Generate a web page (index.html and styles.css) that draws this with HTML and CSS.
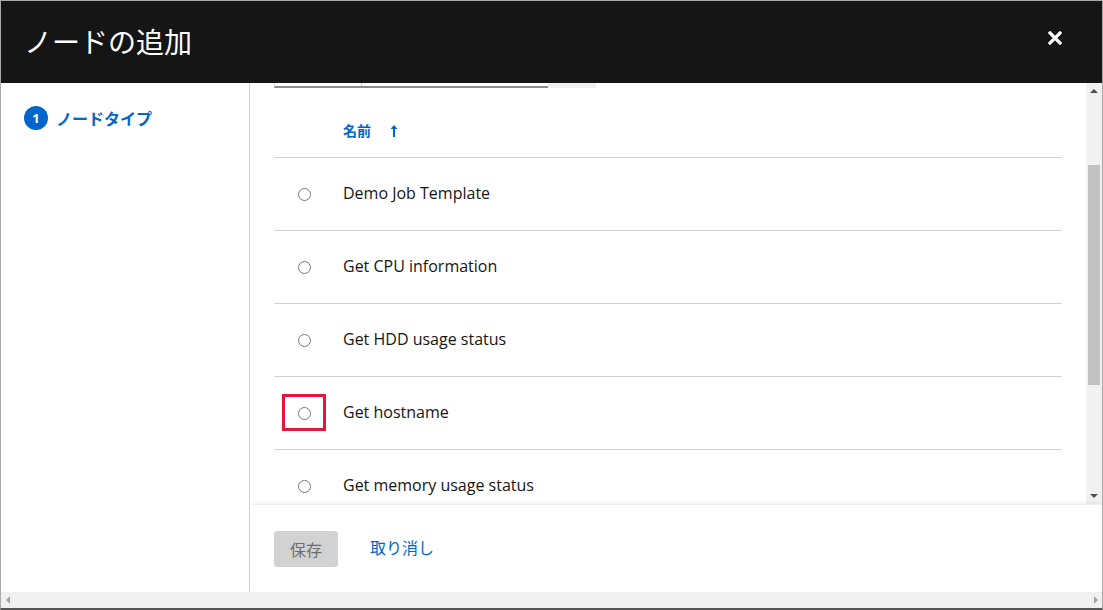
FILE: index.html
```html
<!DOCTYPE html>
<html lang="ja">
<head>
<meta charset="utf-8">
<title>ノードの追加</title>
<link rel="stylesheet" href="styles.css">
</head>
<body>
<div class="window">
  <header class="header">
    <h1 class="title">ノードの追加</h1>
    <button class="close" aria-label="閉じる">
      <svg width="14" height="14" viewBox="0 0 14 14"><path d="M2 2 L12 12 M12 2 L2 12" stroke="#fff" stroke-width="3.2" stroke-linecap="square"/></svg>
    </button>
  </header>
  <div class="body">
    <nav class="sidebar">
      <div class="step"><span class="step-num">1</span><span class="step-label">ノードタイプ</span></div>
    </nav>
    <div class="main">
      <div class="scroll">
        <div class="content">
          <div class="toolbar">
            <div class="search"><span class="search-a"></span><span class="search-b"></span></div>
            <div class="search-btn"></div>
          </div>
          <div class="thead">
            <span class="th-name">名前</span>
            <svg class="sort" width="8" height="12" viewBox="0 0 8 12"><path d="M4 0 L7.5 4 H5 V12 H3 V4 H0.5 Z" fill="#0066cc"/></svg>
          </div>
          <div class="row"><span class="radio-cell"><span class="radio"></span></span><span class="name">Demo Job Template</span></div>
          <div class="row"><span class="radio-cell"><span class="radio"></span></span><span class="name">Get CPU information</span></div>
          <div class="row"><span class="radio-cell"><span class="radio"></span></span><span class="name">Get HDD usage status</span></div>
          <div class="row"><span class="radio-cell marked"><span class="radio"></span></span><span class="name">Get hostname</span></div>
          <div class="row"><span class="radio-cell"><span class="radio"></span></span><span class="name">Get memory usage status</span></div>
        </div>
        <div class="vscroll">
          <span class="arrow up"></span>
          <div class="vtrack"><div class="vthumb"></div></div>
          <span class="arrow down"></span>
        </div>
      </div>
      <footer class="footer">
        <button class="btn-save" disabled>保存</button>
        <a class="btn-cancel" href="#">取り消し</a>
      </footer>
    </div>
  </div>
  <div class="hscroll">
    <span class="harrow left"></span>
    <span class="harrow right"></span>
  </div>
</div>
</body>
</html>
```

FILE: styles.css
```css
*, *::before, *::after { box-sizing: border-box; }
html, body { margin: 0; padding: 0; }
body {
  width: 1103px;
  height: 610px;
  overflow: hidden;
  font-family: "Noto Sans CJK JP", "Open Sans", sans-serif;
  background: #fff;
}
.window {
  width: 1103px;
  height: 610px;
  border: 1px solid #a9a9a9;
  border-bottom: 2px solid #555;
  display: flex;
  flex-direction: column;
}
.header {
  height: 82px;
  flex: none;
  background: #151515;
  display: flex;
  align-items: center;
  justify-content: space-between;
  padding: 0 40px 0 23px;
}
.title {
  margin: 0;
  color: #fff;
  font-weight: 400;
  font-size: 28px;
  line-height: 1;
  font-family: "Noto Sans CJK JP", sans-serif;
  position: relative;
  top: -1px;
}
.close {
  background: none;
  border: 0;
  padding: 0;
  width: 14px;
  height: 14px;
  display: block;
  position: relative;
  top: -4px;
}
.close svg { display: block; }
.body {
  flex: 1;
  display: flex;
  min-height: 0;
}
.sidebar {
  width: 249px;
  flex: none;
  border-right: 1px solid #d2d2d2;
  padding: 23px 0 0 23px;
}
.step {
  display: flex;
  align-items: center;
  gap: 8px;
}
.step-num {
  width: 24px;
  height: 24px;
  border-radius: 50%;
  background: #0066cc;
  color: #fff;
  font-family: "Open Sans", sans-serif;
  font-weight: 700;
  font-size: 13px;
  display: flex;
  align-items: center;
  justify-content: center;
}
.step-label {
  color: #0066cc;
  font-weight: 700;
  font-size: 16px;
  line-height: 24px;
}
.main {
  flex: 1;
  display: flex;
  flex-direction: column;
  min-width: 0;
}
.scroll {
  height: 421px;
  flex: none;
  display: flex;
}
.content {
  flex: 1;
  padding: 0 24px 0 24px;
  overflow: hidden;
}
.toolbar {
  height: 5px;
  display: flex;
}
.search {
  width: 274px;
  height: 5px;
  border-left: 1px solid #d2d2d2;
  border-bottom: 2px solid #8a8d90;
  display: flex;
}
.search-a { width: 87px; border-right: 1px solid #d2d2d2; }
.search-b { flex: 1; }
.search-btn {
  width: 48px;
  height: 5px;
  background: #f0f0f0;
}
.thead {
  height: 70px;
  border-bottom: 1px solid #d2d2d2;
  display: flex;
  align-items: flex-end;
  padding: 0 0 20px 69px;
  gap: 19px;
}
.th-name {
  color: #0066cc;
  font-weight: 700;
  font-size: 14px;
  line-height: 1;
}
.sort { display: block; position: relative; top: 0; }
.row {
  height: 73px;
  border-bottom: 1px solid #d2d2d2;
  display: flex;
  align-items: center;
}
.radio-cell {
  width: 69px;
  display: flex;
  justify-content: flex-start;
  padding-left: 24px;
}
.radio {
  width: 13px;
  height: 13px;
  border: 1px solid #767676;
  border-radius: 50%;
  background: #fff;
  display: block;
}
.marked { position: relative; }
.marked::before {
  content: "";
  position: absolute;
  left: 8px;
  top: -13px;
  width: 44px;
  height: 37px;
  border: 3px solid #e0173e;
}
.name {
  font-family: "Open Sans", sans-serif;
  font-size: 16px;
  font-weight: 500;
  color: #151515;
  position: relative;
  top: -1px;
}
.vscroll {
  width: 16px;
  flex: none;
  background: #f1f1f1;
  display: flex;
  flex-direction: column;
  align-items: center;
}
.arrow {
  width: 0;
  height: 0;
  border-left: 4px solid transparent;
  border-right: 4px solid transparent;
  flex: none;
}
.arrow.up { border-bottom: 4px solid #505050; margin: 6px 0 6px; }
.arrow.down { border-top: 4px solid #505050; margin: 6px 0 6px; }
.vtrack {
  flex: 1;
  width: 100%;
  padding: 66px 2px 0 2px;
}
.vthumb {
  height: 220px;
  background: #c1c1c1;
}
.footer {
  flex: 1;
  border-top: 1px solid #eee;
  box-shadow: 0 -3px 4px -2px rgba(0,0,0,0.08);
  display: flex;
  align-items: center;
  padding: 0 24px;
  gap: 32px;
}
.btn-save {
  width: 64px;
  height: 36px;
  border: 0;
  border-radius: 3px;
  background: #d2d2d2;
  color: #6a6e73;
  font-family: "Noto Sans CJK JP", sans-serif;
  font-size: 16px;
  padding: 0;
  position: relative;
  top: 0;
}
.btn-cancel {
  color: #0066cc;
  text-decoration: none;
  font-size: 16px;
  position: relative;
  top: -2px;
}
.hscroll {
  height: 16px;
  flex: none;
  background: #f0f0f0;
  display: flex;
  align-items: center;
  justify-content: space-between;
  padding: 0 4px 0 5px;
}
.harrow {
  width: 0; height: 0;
  border-top: 4px solid transparent;
  border-bottom: 4px solid transparent;
}
.harrow.left { border-right: 4px solid #a3a3a3; }
.harrow.right { border-left: 4px solid #a3a3a3; }
```
